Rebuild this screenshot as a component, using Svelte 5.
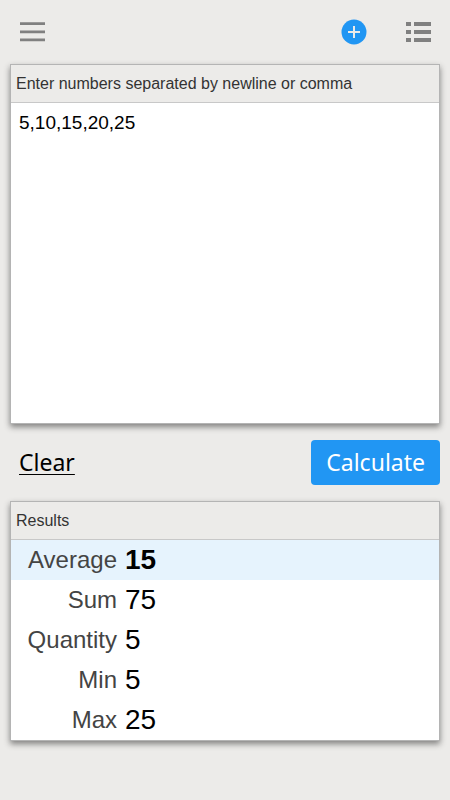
<script lang="ts">
  let text = "5,10,15,20,25";
  let numbers = parse(text);

  $: sum = numbers.reduce((total, n) => total + n, 0);
  $: results = [
    { label: "Average", value: numbers.length ? sum / numbers.length : 0 },
    { label: "Sum", value: sum },
    { label: "Quantity", value: numbers.length },
    { label: "Min", value: numbers.length ? Math.min(...numbers) : 0 },
    { label: "Max", value: numbers.length ? Math.max(...numbers) : 0 },
  ];

  function parse(source: string): number[] {
    return source
      .split(/[\n,]/)
      .filter((part) => part.trim() !== "")
      .map(Number)
      .filter((n) => !Number.isNaN(n));
  }

  function handleCalculate() {
    numbers = parse(text);
  }

  function handleClear() {
    text = "";
    numbers = [];
  }
</script>

<header>
  <button type="button" class="icon-button" aria-label="Menu">
    <svg width="26" height="26" viewBox="0 0 26 26" fill="#808080">
      <path d="M0 3.3h25v2.7H0zM0 11.5h25v2.7H0zM0 19.5h25v2.7H0z" />
    </svg>
  </button>
  <div class="tools">
    <button type="button" class="icon-button" aria-label="Add">
      <svg width="26" height="26" viewBox="0 0 26 26">
        <circle cx="13" cy="13" r="12.5" fill="#2196f3" />
        <path d="M13 7v12M7 13h12" stroke="#ecebe9" stroke-width="2" />
      </svg>
    </button>
    <button type="button" class="icon-button" aria-label="List">
      <svg width="26" height="26" viewBox="0 0 26 26" fill="#808080">
        <path d="M0 3h5v4H0zM8 3h17v4H8zM0 11h5v4H0zM8 11h17v4H8zM0 19h5v4H0zM8 19h17v4H8z" />
      </svg>
    </button>
  </div>
</header>

<main>
  <form on:submit|preventDefault={handleCalculate}>
    <div class="panel">
      <label class="panel-title" for="numbers-input">
        Enter numbers separated by newline or comma
      </label>
      <textarea id="numbers-input" spellcheck="false" bind:value={text}></textarea>
    </div>
    <div class="actions">
      <button type="button" class="clear-button" on:click={handleClear}>Clear</button>
      <button type="submit" class="submit-button">Calculate</button>
    </div>
  </form>

  <section class="panel">
    <h2 class="panel-title">Results</h2>
    <table>
      <tbody>
        {#each results as result, i}
          <tr class:highlight={i === 0}>
            <th scope="row">{result.label}</th>
            <td>{result.value}</td>
          </tr>
        {/each}
      </tbody>
    </table>
  </section>
</main>

<style>
  :global(body) {
    background-color: #ecebe9;
    font-family: "Liberation Sans", Arial, sans-serif;
    color: #000000;
  }
  header {
    display: flex;
    align-items: center;
    justify-content: space-between;
    height: 64px;
    padding: 0 18px 0 20px;
  }
  .tools {
    display: flex;
    gap: 39px;
  }
  .icon-button {
    display: flex;
    padding: 0;
    border: none;
    background: none;
    cursor: pointer;
  }
  main {
    padding: 0 10px 24px;
  }
  .panel {
    border: 1px solid #b4b4b4;
    background-color: #ffffff;
    box-shadow: 0 3px 6px rgba(0, 0, 0, 0.45);
  }
  .panel-title {
    display: block;
    margin: 0;
    padding: 0 5px;
    border-bottom: 1px solid #c8c8c8;
    background-color: #ecebe9;
    font-size: 16px;
    font-weight: normal;
    line-height: 37px;
    color: #333333;
  }
  textarea {
    display: block;
    width: 100%;
    height: 320px;
    padding: 8px;
    border: none;
    outline: none;
    resize: none;
    box-sizing: border-box;
    font-family: inherit;
    font-size: 19px;
    line-height: 24px;
    color: #000000;
  }
  .actions {
    display: flex;
    align-items: center;
    justify-content: space-between;
    padding: 16px 0;
  }
  .clear-button,
  .submit-button {
    border: none;
    font-family: "Noto Sans", sans-serif;
    font-size: 23px;
    line-height: 45px;
    cursor: pointer;
  }
  .clear-button {
    padding: 0 9px;
    background: none;
    color: #000000;
    text-decoration: underline;
    text-decoration-thickness: 1px;
    text-underline-offset: 3px;
  }
  .submit-button {
    padding: 0 15px;
    border-radius: 4px;
    background-color: #2196f3;
    color: #ffffff;
  }
  table {
    width: 100%;
    border-collapse: collapse;
  }
  .highlight {
    background-color: #e6f3fd;
  }
  th,
  td {
    height: 40px;
    padding: 0;
  }
  th {
    width: 106px;
    font-size: 24px;
    font-weight: normal;
    text-align: right;
    color: #444444;
  }
  td {
    padding-left: 8px;
    font-size: 28px;
  }
  .highlight td {
    font-weight: bold;
  }
</style>
